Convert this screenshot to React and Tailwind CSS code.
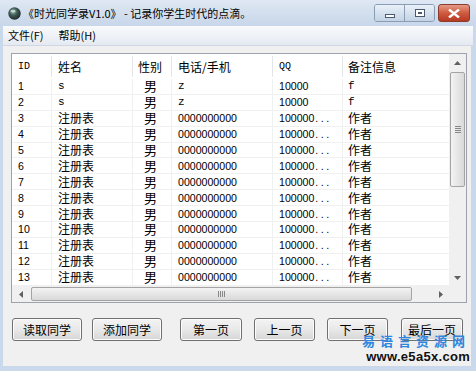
import React from 'react';

const cjk = '[font-family:"Noto_Sans_CJK_SC","Noto_Sans",sans-serif]';
const latin = '[font-family:"Liberation_Sans","Noto_Sans_CJK_SC",sans-serif]';
const mono = '[font-family:"Liberation_Mono","Noto_Sans_CJK_SC",monospace]';

const colW = ['w-[40px]', 'w-[81px]', 'w-[39px]', 'w-[101px]', 'w-[70px]', 'w-[106px]'];

const rows = [
  ['1', 's', '男', 'z', '10000', 'f'],
  ['2', 's', '男', 'z', '10000', 'f'],
  ...Array.from({ length: 11 }, (_, i) => [String(i + 3), '注册表', '男', '0000000000', '100000...', '作者']),
];

// pick a font for one cell, roughly like the SimSun list in the shot
function Cell({ text }) {
  if (text === '男') return <span className={cjk + ' text-[13px] leading-[14px] pl-[5px]'}>{text}</span>;
  if (/^[a-z]$/.test(text)) return <span className={mono + ' text-[11px] leading-[14px] text-black'}>{text}</span>;
  if (text.endsWith('...'))
    return (
      <span className={latin + ' text-[10.6px] leading-[14px]'}>
        {text.slice(0, -3)}
        <span className="tracking-[2.5px] pl-[1px]">...</span>
      </span>
    );
  if (/^[0-9]+$/.test(text)) return <span className={latin + ' text-[10.6px] leading-[14px]'}>{text}</span>;
  return <span className={cjk + ' text-[12px] leading-[14px]'}>{text}</span>;
}

function Btn({ label, className }) {
  return (
    <button
      className={
        'h-[23px] shrink-0 rounded-[3px] border border-[#707070] bg-gradient-to-b from-[#f4f4f4] via-[#e8e8e8] to-[#d6d6d6] shadow-[inset_0_0_0_1px_#fcfcfc] text-[12px] text-black ' +
        cjk +
        ' ' +
        className
      }
    >
      {label}
    </button>
  );
}

function ArrowUp() {
  return (
    <svg width="7" height="4" viewBox="0 0 7 4">
      <path d="M0 4 L3.5 0 L7 4 Z" fill="#606060" />
    </svg>
  );
}

function ArrowDown() {
  return (
    <svg width="7" height="4" viewBox="0 0 7 4">
      <path d="M0 0 L3.5 4 L7 0 Z" fill="#606060" />
    </svg>
  );
}

function ArrowLeft() {
  return (
    <svg width="4" height="7" viewBox="0 0 4 7">
      <path d="M4 0 L0 3.5 L4 7 Z" fill="#606060" />
    </svg>
  );
}

function ArrowRight() {
  return (
    <svg width="4" height="7" viewBox="0 0 4 7">
      <path d="M0 0 L4 3.5 L0 7 Z" fill="#606060" />
    </svg>
  );
}

export default function App() {
  return (
    <div className="relative w-[476px] h-[371px] overflow-hidden flex flex-col bg-[#c9d8ea]">
      {/* Title bar */}
      <div className="h-[26px] shrink-0 flex items-center bg-gradient-to-b from-[#dfe8f3] to-[#c7d6e9] pl-[8px]">
        <svg width="13" height="13" viewBox="0 0 13 13">
          <defs>
            <radialGradient id="ball" cx="0.4" cy="0.35" r="0.7">
              <stop offset="0" stopColor="#8fb8a8" />
              <stop offset="0.45" stopColor="#3f5a55" />
              <stop offset="1" stopColor="#1c2426" />
            </radialGradient>
          </defs>
          <circle cx="6.5" cy="6.5" r="6.2" fill="url(#ball)" />
          <ellipse cx="5" cy="4.2" rx="2.6" ry="1.4" fill="#dfeee8" opacity="0.7" />
        </svg>
        <span className={cjk + ' ml-[2px] text-[11px] text-black leading-none'}>《时光同学录V1.0》 - 记录你学生时代的点滴。</span>
        <div className="ml-auto flex items-start self-start mt-[4px] mr-[6px]">
          <div className="flex h-[18px] rounded-[3px] border border-[#8b9db5] overflow-hidden">
            <div className="w-[30px] h-full bg-gradient-to-b from-[#e9f0f8] to-[#c4d3e5] flex items-center justify-center border-r border-[#8b9db5]">
              <div className="w-[10px] h-[4px] border border-[#4a5870] bg-white mt-[5px]" />
            </div>
            <div className="w-[29px] h-full bg-gradient-to-b from-[#e9f0f8] to-[#c4d3e5] flex items-center justify-center">
              <div className="w-[10px] h-[8px] border border-[#4a5870] bg-white flex items-center justify-center">
                <div className="w-[4px] h-[2px] bg-[#4a5870]" />
              </div>
            </div>
          </div>
          <div className="ml-[3px] w-[32px] h-[18px] rounded-[3px] border border-[#8e3b2c] bg-gradient-to-b from-[#e39a87] via-[#cf5a3f] to-[#b53a22] flex items-center justify-center">
            <svg width="12" height="9" viewBox="0 0 12 9">
              <path d="M1 0.5 L6 4.5 L11 0.5 M1 8.5 L6 4.5 L11 8.5" stroke="#ffffff" strokeWidth="2.4" fill="none" />
            </svg>
          </div>
        </div>
      </div>

      {/* Menu bar */}
      <div className="h-[20px] shrink-0 mx-[3px] flex items-center bg-gradient-to-b from-[#f8fafc] to-[#e5eaf2] border-b border-[#d0d7e2]">
        <span className={cjk + ' ml-[5px] text-[11px] text-black leading-none'}>文件(F)</span>
        <span className={cjk + ' ml-[15px] text-[11px] text-black leading-none'}>帮助(H)</span>
      </div>

      {/* Client area */}
      <div className="flex-1 ml-[3px] mr-[5px] mb-[5px] bg-[#f0f0f0] flex flex-col">
        {/* List view */}
        <div className="mt-[7px] ml-[8px] w-[456px] h-[250px] border border-[#9ca3ad] bg-white flex flex-col">
          <div className="flex h-[232px]">
            <div className="w-[437px] flex flex-col">
              {/* header */}
              <div className="h-[25px] flex shrink-0">
                {['ID', '姓名', '性别', '电话/手机', 'QQ', '备注信息'].map((h, i) => (
                  <div
                    key={i}
                    className={
                      colW[i] +
                      ' shrink-0 flex items-center border-r border-[#e3e5e8] my-[2px] ' +
                      (i === 2 ? 'pl-[5px]' : i === 5 ? 'pl-[5px] border-r-0' : 'pl-[6px]')
                    }
                  >
                    {h === 'ID' || h === 'QQ' ? (
                      <span className={mono + ' text-[10px] leading-none'}>{h}</span>
                    ) : (
                      <span className={cjk + ' text-[12px] leading-none'}>{h}</span>
                    )}
                  </div>
                ))}
              </div>
              {/* rows */}
              {rows.map((r, ri) => (
                <div key={ri} className="h-[15.9px] flex shrink-0 border-b border-[#f0f0f0]">
                  {r.map((c, ci) => (
                    <div
                      key={ci}
                      className={
                        colW[ci] +
                        ' shrink-0 flex items-center whitespace-nowrap border-r border-[#f0f0f0] ' +
                        (ci === 5 ? 'pl-[5px] border-r-0' : 'pl-[6px]')
                      }
                    >
                      <Cell text={c} />
                    </div>
                  ))}
                </div>
              ))}
            </div>
            {/* vertical scrollbar */}
            <div className="w-[17px] h-full bg-[#f0f0f0] flex flex-col items-center">
              <div className="h-[17px] w-full flex items-center justify-center">
                <ArrowUp />
              </div>
              <div className="flex-1 w-full px-[1px] pt-[1px]">
                <div className="h-[115px] w-full rounded-[2px] border border-[#a4a4a4] bg-gradient-to-r from-[#f3f3f3] to-[#d9d9d9] flex flex-col items-center justify-center gap-[1px]">
                  <div className="w-[6px] h-[1px] bg-[#888]" />
                  <div className="w-[6px] h-[1px] bg-[#888]" />
                  <div className="w-[6px] h-[1px] bg-[#888]" />
                  <div className="w-[6px] h-[1px] bg-[#888]" />
                </div>
              </div>
              <div className="h-[17px] w-full flex items-center justify-center">
                <ArrowDown />
              </div>
            </div>
          </div>
          {/* horizontal scrollbar */}
          <div className="flex h-[16px] bg-[#f0f0f0]">
            <div className="w-[17px] flex items-center justify-center">
              <ArrowLeft />
            </div>
            <div className="w-[403px] py-[1px] pl-[2px]">
              <div className="h-full w-[381px] rounded-[2px] border border-[#a4a4a4] bg-gradient-to-b from-[#f3f3f3] to-[#d9d9d9] flex items-center justify-center gap-[1px]">
                <div className="w-[1px] h-[6px] bg-[#888]" />
                <div className="w-[1px] h-[6px] bg-[#888]" />
                <div className="w-[1px] h-[6px] bg-[#888]" />
                <div className="w-[1px] h-[6px] bg-[#888]" />
              </div>
            </div>
            <div className="w-[17px] flex items-center justify-center">
              <ArrowRight />
            </div>
            <div className="w-[17px] bg-[#f0f0f0]" />
          </div>
        </div>

        {/* Buttons */}
        <div className="mt-[15px] flex">
          <Btn label="读取同学" className="ml-[9px] w-[70px]" />
          <Btn label="添加同学" className="ml-[10px] w-[70px]" />
          <Btn label="第一页" className="ml-[18px] w-[62px]" />
          <Btn label="上一页" className="ml-[12px] w-[61px]" />
          <Btn label="下一页" className="ml-[12px] w-[61px]" />
          <Btn label="最后一页" className="ml-[13px] w-[62px]" />
        </div>
      </div>

      {/* watermark */}
      <div className="absolute left-[362px] top-[334px] flex flex-col items-end">
        <span className={cjk + ' text-[13px] font-bold leading-none text-[#2f86dd] tracking-[5px]'}>易语言资源网</span>
        <span className={latin + ' mt-[3px] text-[13px] font-bold leading-none text-[#111] tracking-[0.3px]'}>www.e5a5x.com</span>
      </div>
    </div>
  );
}
